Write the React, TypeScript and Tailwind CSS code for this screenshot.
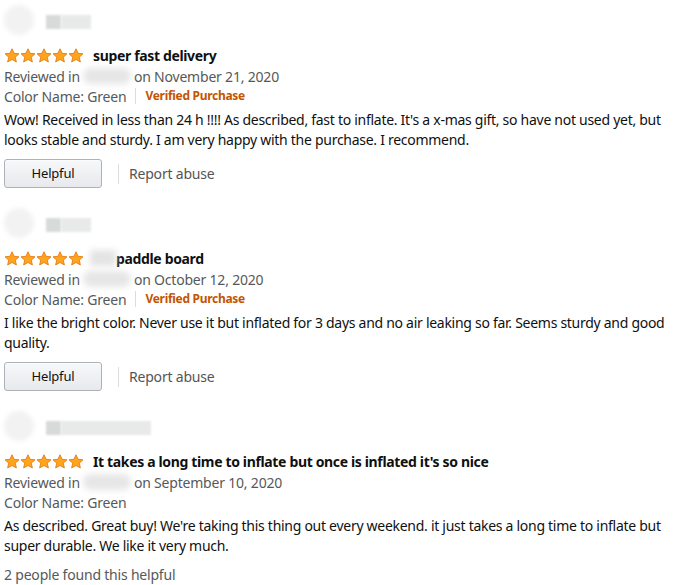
import type { ReactNode } from 'react';

type Review = {
  title: string;
  titleBlur?: boolean;
  date: string;
  verified: boolean;
  body: string;
  helpfulCount?: number;
  avatarWide?: boolean;
};

const REVIEWS: Review[] = [
  {
    title: 'super fast delivery',
    date: 'on November 21, 2020',
    verified: true,
    body: "Wow! Received in less than 24 h !!!! As described, fast to inflate. It's a x-mas gift, so have not used yet, but looks stable and sturdy. I am very happy with the purchase. I recommend.",
  },
  {
    title: 'paddle board',
    titleBlur: true,
    date: 'on October 12, 2020',
    verified: true,
    body: 'I like the bright color. Never use it but inflated for 3 days and no air leaking so far. Seems sturdy and good quality.',
  },
  {
    title: "It takes a long time to inflate but once is inflated it's so nice",
    date: 'on September 10, 2020',
    verified: false,
    body: "As described. Great buy! We're taking this thing out every weekend. it just takes a long time to inflate but super durable. We like it very much.",
    helpfulCount: 2,
    avatarWide: true,
  },
];

function Star() {
  return (
    <svg width="16" height="15" viewBox="0 0 24 23" className="shrink-0">
      <path
        d="M12 1.2l3.2 6.9 7.5.8-5.6 5.1 1.6 7.4L12 17.6l-6.7 3.8 1.6-7.4L1.3 8.9l7.5-.8z"
        fill="#ffa41c"
        stroke="#e47911"
        strokeWidth="1.3"
        strokeLinejoin="round"
      />
    </svg>
  );
}

function Blur({ className }: { className: string }) {
  return <span className={`inline-block blur-[3px] ${className}`} />;
}

function Avatar({ wide }: { wide?: boolean }) {
  return (
    <div className="flex items-center h-[30px] gap-3">
      <div className="w-[30px] h-[30px] rounded-full bg-[#f2f2f2] blur-[2px]" />
      <div className="flex items-center h-[14px] mt-1">
        <div className="w-[15px] h-[14px] bg-[#d8d9d9] blur-[1px]" />
        <div className={`${wide ? 'w-[90px]' : 'w-[30px]'} h-[14px] bg-[#e8e9e9] blur-[1px]`} />
      </div>
    </div>
  );
}

function Meta({ children }: { children: ReactNode }) {
  return <div className="h-[20px] flex items-center text-[14px] text-[#565959]">{children}</div>;
}

function ReviewItem({ r }: { r: Review }) {
  return (
    <div className="flex flex-col">
      <Avatar wide={r.avatarWide} />
      <div className="h-[22px] mt-[9px] flex items-center">
        <div className="flex">
          <Star />
          <Star />
          <Star />
          <Star />
          <Star />
        </div>
        {r.titleBlur ? <Blur className="w-[26px] h-[16px] bg-[#e4e4e4] ml-[6px]" /> : null}
        <span
          className={`${r.titleBlur ? 'ml-[0px]' : 'ml-[9px]'} text-[14px] font-bold text-[#0f1111] tracking-[-0.35px]`}
        >
          {r.title}
        </span>
      </div>
      <Meta>
        <span>Reviewed in</span>
        <Blur className="w-[48px] h-[16px] bg-[#e6e6e6] rounded-full mx-[3px]" />
        <span>{r.date}</span>
      </Meta>
      <Meta>
        <span>Color Name: Green</span>
        {r.verified ? (
          <>
            <span className="w-px h-[16px] bg-[#ddd] mx-[9px]" />
            <span className="text-[12px] font-bold text-[#c45500] tracking-[-0.3px]">Verified Purchase</span>
          </>
        ) : null}
      </Meta>
      <p className="mt-[4px] text-[14px] leading-[20px] text-[#0f1111] tracking-[-0.28px]">{r.body}</p>
      {r.helpfulCount ? (
        <div className="mt-[8px] text-[14px] text-[#565959] h-[20px] flex items-center">
          {r.helpfulCount} people found this helpful
        </div>
      ) : (
        <div className="mt-[9px] flex items-center h-[29px]">
          <button className="w-[98px] h-[29px] rounded-[3px] border border-[#adb1b8] bg-gradient-to-b from-[#f7f8fa] to-[#e7e9ec] text-[13px] text-[#111] shadow-[0_1px_0_rgba(255,255,255,0.6)_inset]">
            Helpful
          </button>
          <span className="w-px h-[20px] bg-[#ddd] ml-[16px]" />
          <span className="ml-[10px] text-[14px] text-[#555]">Report abuse</span>
        </div>
      )}
    </div>
  );
}

export default function App() {
  return (
    <div
      className="w-[682px] h-[585px] overflow-hidden bg-white pl-[4px] pr-[4px] pt-[5px] flex flex-col gap-[20px] tracking-[-0.2px]"
      style={{ fontFamily: '"Noto Sans", Arial, sans-serif' }}
    >
      {REVIEWS.map((r, i) => (
        <ReviewItem key={i} r={r} />
      ))}
    </div>
  );
}
